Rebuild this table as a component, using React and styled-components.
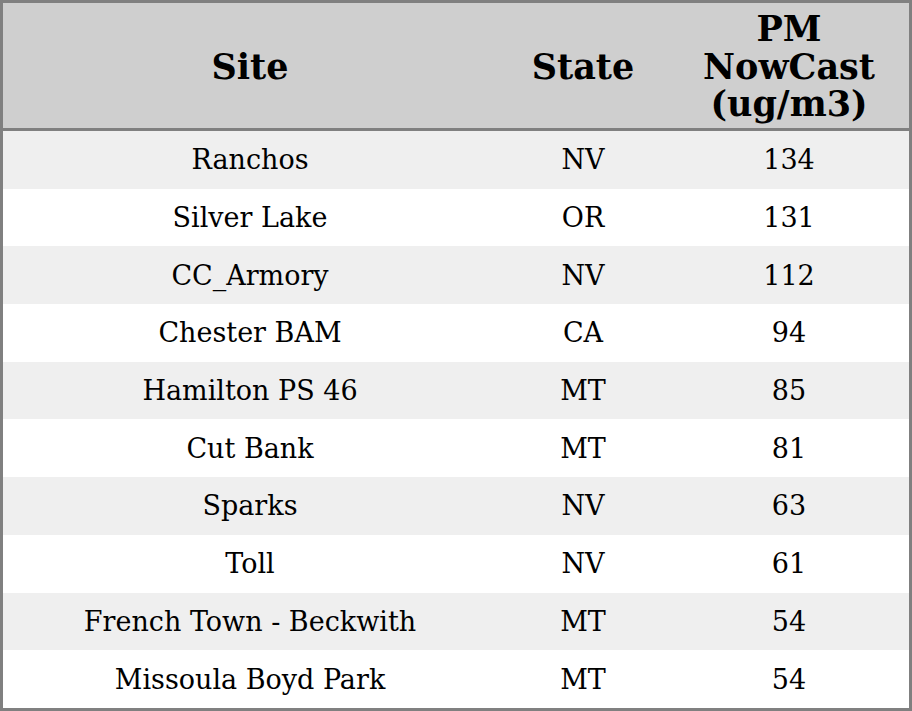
import React from 'react'
import styled, { createGlobalStyle, css } from 'styled-components'

const GlobalStyle = createGlobalStyle`
  html, body {
    margin: 0;
    padding: 0;
    background: #ffffff;
  }
  body {
    font-family: 'DejaVu Serif', 'Liberation Serif', serif;
  }
`

const rows = [
  { site: 'Ranchos', state: 'NV', pm: 134 },
  { site: 'Silver Lake', state: 'OR', pm: 131 },
  { site: 'CC_Armory', state: 'NV', pm: 112 },
  { site: 'Chester BAM', state: 'CA', pm: 94 },
  { site: 'Hamilton PS 46', state: 'MT', pm: 85 },
  { site: 'Cut Bank', state: 'MT', pm: 81 },
  { site: 'Sparks', state: 'NV', pm: 63 },
  { site: 'Toll', state: 'NV', pm: 61 },
  { site: 'French Town - Beckwith', state: 'MT', pm: 54 },
  { site: 'Missoula Boyd Park', state: 'MT', pm: 54 }
]

export default function App() {
  return (
    <>
      <GlobalStyle />
      <Frame>
        <Table>
          <colgroup>
            <col style={{ width: 494 }} />
            <col style={{ width: 172 }} />
            <col style={{ width: 240 }} />
          </colgroup>
          <thead>
            <tr>
              <HeadCell>Site</HeadCell>
              <HeadCell>State</HeadCell>
              <HeadCell>
                PM
                <br />
                NowCast
                <br />
                (ug/m3)
              </HeadCell>
            </tr>
          </thead>
          <tbody>
            {rows.map((row, index) => (
              <Row key={index} striped={index % 2 === 0}>
                <Cell>{row.site}</Cell>
                <Cell>{row.state}</Cell>
                <Cell>{row.pm}</Cell>
              </Row>
            ))}
          </tbody>
        </Table>
      </Frame>
    </>
  )
}

const Frame = styled.div`
  width: 912px;
  height: 711px;
  box-sizing: border-box;
  border: 3px solid #808080;
  overflow: hidden;
`

const Table = styled.table`
  width: 906px;
  table-layout: fixed;
  border-collapse: separate;
  border-spacing: 0;
  color: #000000;
`

const HeadCell = styled.th`
  height: 128px;
  box-sizing: border-box;
  padding: 2px 0 0;
  background-color: #cfcfcf;
  border-bottom: 3px solid #808080;
  font-size: 35px;
  font-weight: bold;
  line-height: 37.5px;
  text-align: center;
  vertical-align: middle;
`

const Row = styled.tr`
  background-color: #ffffff;
  ${({ striped }) =>
    striped &&
    css`
      background-color: #efefef;
    `}
`

const Cell = styled.td`
  height: 57.7px;
  box-sizing: border-box;
  padding: 1px 0 0;
  font-size: 27px;
  line-height: 32px;
  text-align: center;
  vertical-align: middle;
`
